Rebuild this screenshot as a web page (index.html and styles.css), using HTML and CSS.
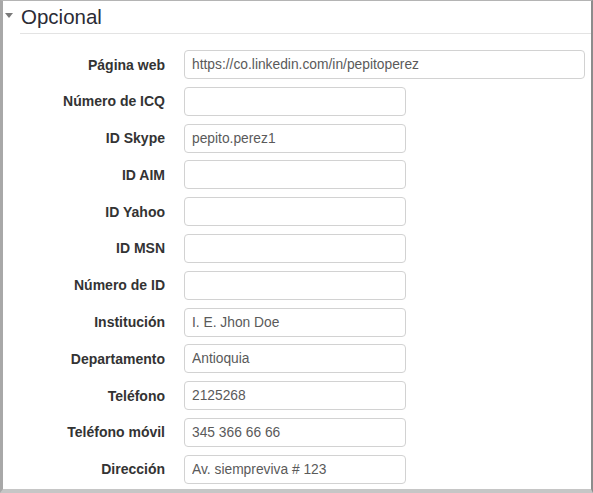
FILE: index.html
```html
<!DOCTYPE html>
<html lang="es">
<head>
<meta charset="utf-8">
<title>Opcional</title>
<link rel="stylesheet" href="styles.css">
</head>
<body>
<div class="frame">
  <div class="legend">
    <span class="caret"></span>
    <h2 class="legend-title">Opcional</h2>
  </div>
  <form class="form">
    <div class="row"><label class="label">Página web</label><input class="field wide" type="text" value="https://co.linkedin.com/in/pepitoperez"></div>
    <div class="row"><label class="label">Número de ICQ</label><input class="field" type="text" value=""></div>
    <div class="row"><label class="label">ID Skype</label><input class="field" type="text" value="pepito.perez1"></div>
    <div class="row"><label class="label">ID AIM</label><input class="field" type="text" value=""></div>
    <div class="row"><label class="label">ID Yahoo</label><input class="field" type="text" value=""></div>
    <div class="row"><label class="label">ID MSN</label><input class="field" type="text" value=""></div>
    <div class="row"><label class="label">Número de ID</label><input class="field" type="text" value=""></div>
    <div class="row"><label class="label">Institución</label><input class="field" type="text" value="I. E. Jhon Doe"></div>
    <div class="row"><label class="label">Departamento</label><input class="field" type="text" value="Antioquia"></div>
    <div class="row"><label class="label">Teléfono</label><input class="field" type="text" value="2125268"></div>
    <div class="row"><label class="label">Teléfono móvil</label><input class="field" type="text" value="345 366 66 66"></div>
    <div class="row"><label class="label">Dirección</label><input class="field" type="text" value="Av. siempreviva # 123"></div>
  </form>
</div>
</body>
</html>
```
FILE: styles.css
```css
html, body {
  margin: 0;
  padding: 0;
  background: #ffffff;
}
body {
  font-family: "Liberation Sans", Arial, sans-serif;
}
.frame {
  box-sizing: border-box;
  width: 593px;
  height: 493px;
  overflow: hidden;
  border-top: 1px solid #b4b4b4;
  border-left: 3px solid #a8a8a8;
  border-right: 2px solid #8c8c8c;
  border-bottom: 4px solid #c6c6c6;
  background: #fff;
}
.legend {
  display: flex;
  align-items: center;
  height: 32px;
  margin-left: 17px;
  border-bottom: 1px solid #e3e3e3;
  position: relative;
}
.caret {
  position: absolute;
  left: -15px;
  top: 12px;
  width: 0;
  height: 0;
  border-left: 4px solid transparent;
  border-right: 4px solid transparent;
  border-top: 5px solid #7a7a7a;
}
.legend-title {
  margin: 0 0 0 1px;
  font-size: 20.5px;
  font-weight: normal;
  color: #2b2b35;
  line-height: 30px;
}
.form {
  display: flex;
  flex-direction: column;
  gap: 7.8px;
  padding-top: 16px;
}
.row {
  display: flex;
  align-items: center;
  gap: 19px;
}
.label {
  width: 162px;
  text-align: right;
  font-size: 14px;
  font-weight: bold;
  color: #333;
}
.field {
  box-sizing: border-box;
  width: 222px;
  height: 29px;
  margin: 0;
  padding: 0 7px;
  border: 1px solid #d2d2d2;
  border-radius: 4px;
  font-family: "Liberation Sans", Arial, sans-serif;
  font-size: 13.8px;
  color: #5a5a5a;
  background: #fff;
  outline: none;
}
.field.wide {
  width: 401px;
}
```
